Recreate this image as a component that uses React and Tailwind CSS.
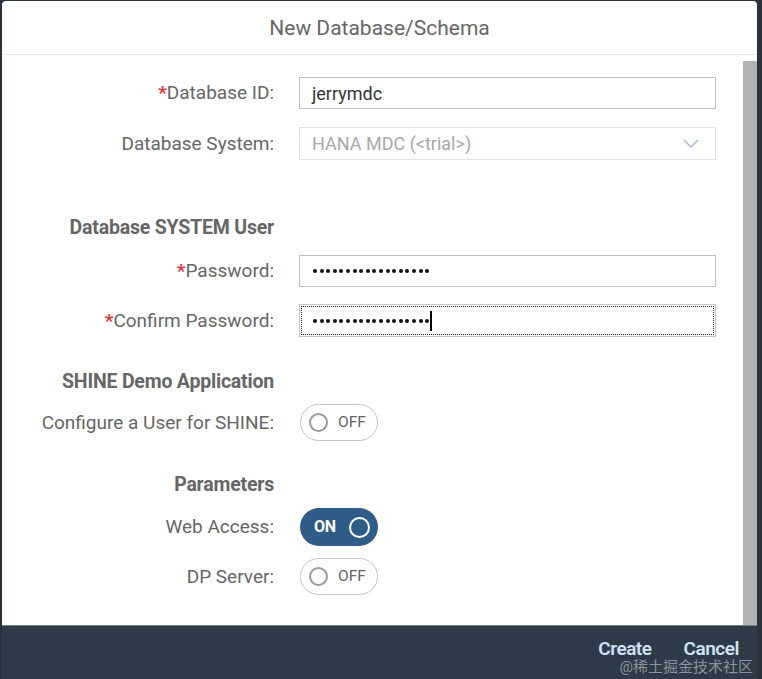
import React from 'react';

const font = { fontFamily: 'Roboto, "Liberation Sans", sans-serif' };

function Label({ required, children }) {
  return (
    <div className="w-[272px] shrink-0 text-right text-[19px] leading-[22px] text-[#666]">
      {required && <span className="text-[#e0393e] font-bold">*</span>}
      {children}
    </div>
  );
}

function Heading({ children, className }) {
  return (
    <div className={`flex ${className}`}>
      <div className="w-[272px] text-right text-[19.5px] leading-[20px] font-bold text-[#666] tracking-[-0.2px]">{children}</div>
    </div>
  );
}

function Dots({ count }) {
  return (
    <div className="flex items-center gap-[2.6px]">
      {Array.from({ length: count }).map((_, i) => (
        <span key={i} className="w-[4px] h-[4px] rounded-full bg-[#111]" />
      ))}
    </div>
  );
}

function Toggle({ on }) {
  if (on) {
    return (
      <div className="w-[78px] h-[38px] rounded-full bg-[#2f5d88] flex items-center pl-[14px] pr-[8px] justify-between">
        <span className="text-[16px] font-bold text-white tracking-tight">ON</span>
        <span className="w-[21px] h-[21px] rounded-full border-[2.5px] border-white" />
      </div>
    );
  }
  return (
    <div className="w-[78px] h-[37px] rounded-full border border-[#c4c4c4] bg-white flex items-center pl-[8px] gap-[10px]">
      <span className="w-[19px] h-[19px] rounded-full border-2 border-[#9a9a9a]" />
      <span className="text-[15.5px] text-[#666]">OFF</span>
    </div>
  );
}

export default function App() {
  return (
    <div className="w-[762px] h-[679px] bg-[#2a333d] flex overflow-hidden" style={font}>
      <div className="relative ml-[2px] mt-[1px] w-[755px] h-[678px] bg-white rounded-t-[4px] flex flex-col">
        {/* Header */}
        <div className="h-[54px] shrink-0 border-b border-[#e6e6e6] flex items-center justify-center">
          <span className="text-[21px] text-[#666] pt-[2px]">New Database/Schema</span>
        </div>

        {/* Body */}
        <div className="flex flex-1 min-h-0">
          <div className="flex-1 flex flex-col">
            <div className="flex items-center gap-[25px] mt-[22px]">
              <Label required>Database ID:</Label>
              <div className="w-[417px] h-[32px] border border-[#bfbfbf] flex items-center pl-[12px] text-[18px] text-[#333]">
                jerrymdc
              </div>
            </div>

            <div className="flex items-center gap-[25px] mt-[18px]">
              <Label>Database System:</Label>
              <div className="w-[417px] h-[33px] border border-[#e2e2e2] flex items-center justify-between pl-[12px] pr-[16px] text-[18px] text-[#a8a8a8]">
                <span>HANA MDC (&lt;trial&gt;)</span>
                <svg width="16" height="9" viewBox="0 0 16 9" fill="none">
                  <polyline points="1,1 8,8 15,1" stroke="#9fb5c9" strokeWidth="1.3" />
                </svg>
              </div>
            </div>

            <Heading className="mt-[58px]">Database SYSTEM User</Heading>

            <div className="flex items-center gap-[25px] mt-[17px]">
              <Label required>Password:</Label>
              <div className="w-[417px] h-[32px] border border-[#bfbfbf] flex items-center pl-[13px]">
                <Dots count={18} />
              </div>
            </div>

            <div className="flex items-center gap-[25px] mt-[17px]">
              <Label required>Confirm Password:</Label>
              <div className="w-[417px] h-[33px] border border-[#c8c8c8] p-[1px]">
                <div className="w-full h-full border border-dotted border-[#222] flex items-center pl-[11px]">
                  <Dots count={18} />
                  <span className="w-[2px] h-[20px] bg-black ml-[1px]" />
                </div>
              </div>
            </div>

            <Heading className="mt-[35px]">SHINE Demo Application</Heading>

            <div className="flex items-center gap-[26px] mt-[12px]">
              <Label>Configure a User for SHINE:</Label>
              <Toggle />
            </div>

            <Heading className="mt-[34px]">Parameters</Heading>

            <div className="flex items-center gap-[26px] mt-[13px]">
              <Label>Web Access:</Label>
              <Toggle on />
            </div>

            <div className="flex items-center gap-[26px] mt-[12px]">
              <Label>DP Server:</Label>
              <Toggle />
            </div>
          </div>

          {/* Scrollbar */}
          <div className="w-[14px] shrink-0 pt-[6px]">
            <div className="h-full bg-[#b3b3b3]" />
          </div>
        </div>

        {/* Footer */}
        <div className="h-[54px] shrink-0 bg-[#2d3a48] border-t border-[#6f7f90] flex justify-end items-start pt-[9px] pr-[18px] gap-[32px]">
          <span className="text-[19px] font-semibold text-[#cfe3f5] tracking-tight">Create</span>
          <span className="text-[19px] font-semibold text-[#cfe3f5] tracking-tight">Cancel</span>
        </div>

        <div
          className="absolute right-[4px] bottom-[4px] text-[15px] text-[#8b939c] leading-none"
          style={{ fontFamily: 'Roboto, "Noto Sans CJK SC", sans-serif' }}
        >
          @稀土掘金技术社区
        </div>
      </div>
    </div>
  );
}
